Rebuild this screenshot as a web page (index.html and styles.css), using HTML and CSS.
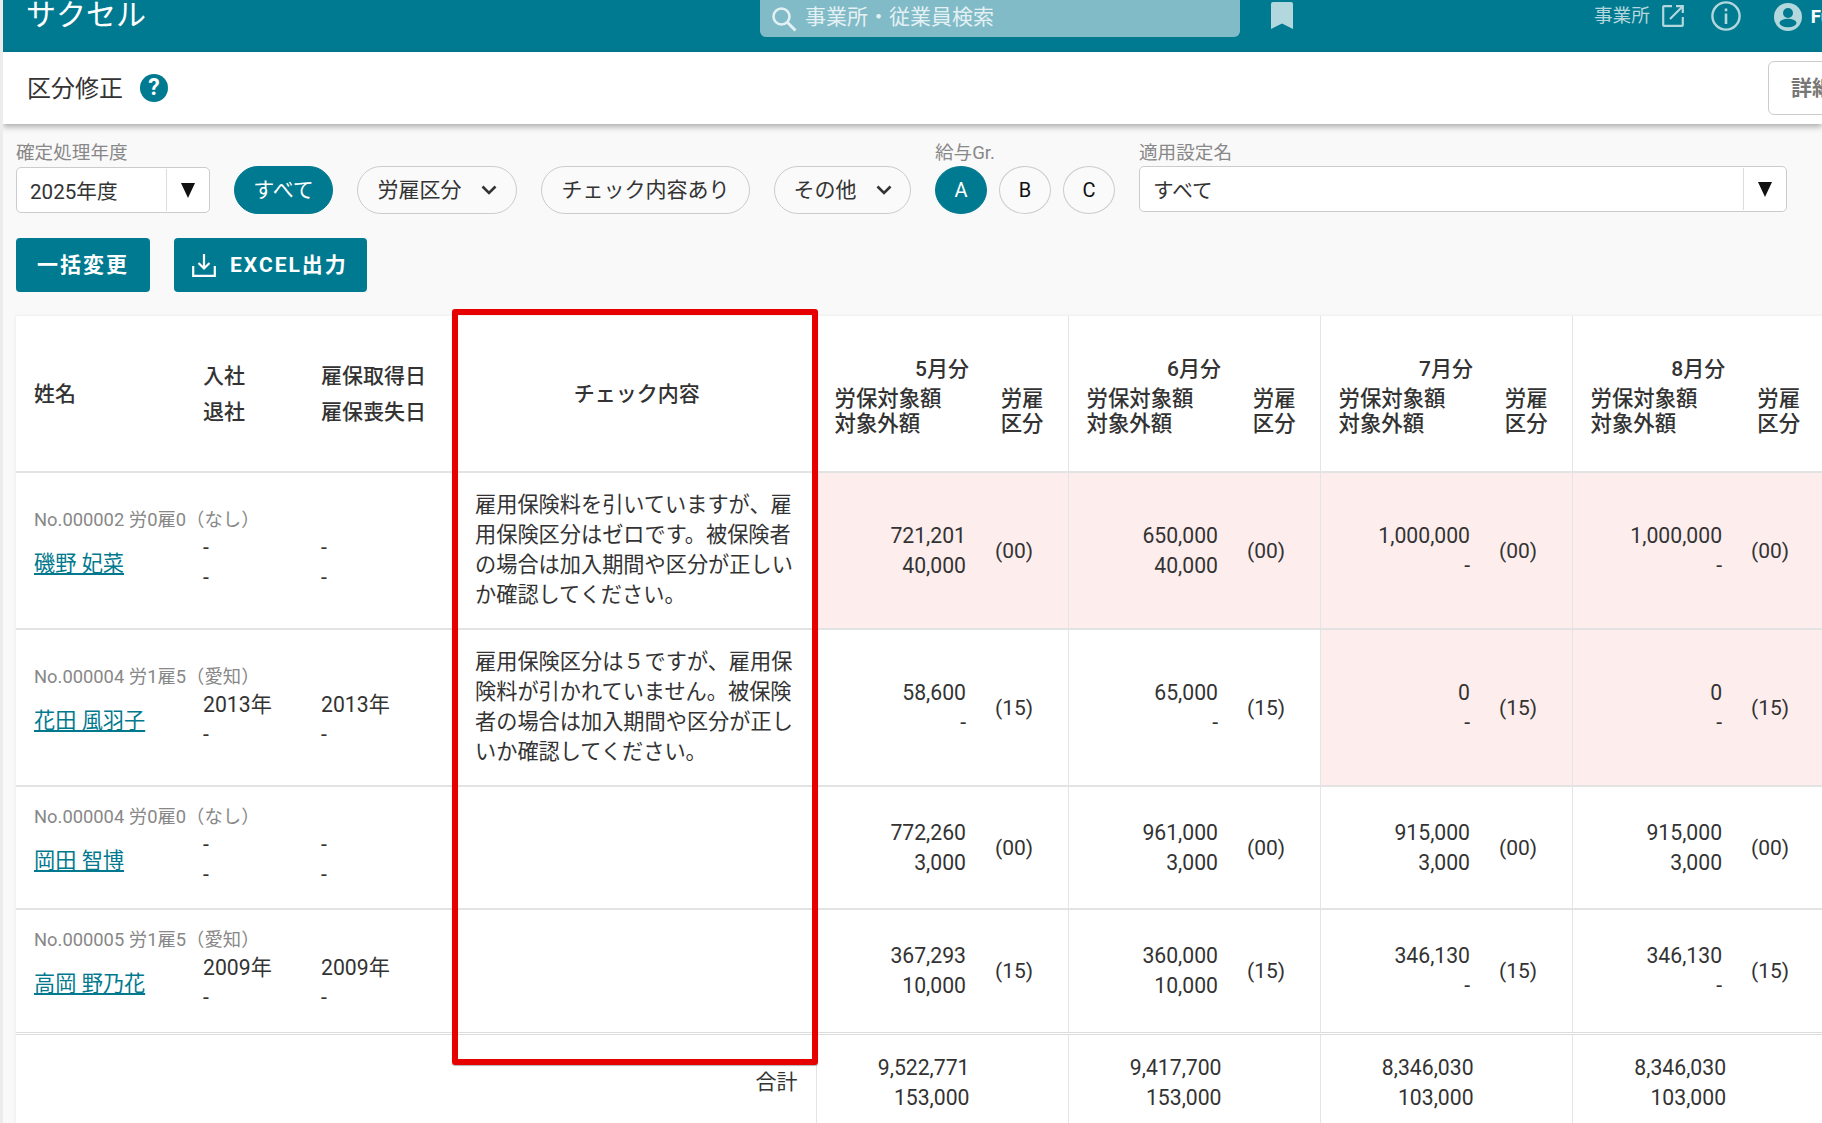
FILE: index.html
```html
<!DOCTYPE html>
<html lang="ja">
<head>
    <meta charset="UTF-8">
    <meta name="viewport" content="width=device-width, initial-scale=1.0">
    <title>区分修正</title>
    <link rel="stylesheet" href="styles.css">
</head>
<body>
    <div class="page">
        <header class="top-bar">
            <div class="logo">サクセル</div>
            <div class="search-box">
                <svg class="search-icon" viewBox="0 0 26 26" width="26" height="26"><circle cx="10.5" cy="10.5" r="8" fill="none" stroke="currentColor" stroke-width="2.6"/><path d="M16.5 16.5L24.5 24.5" stroke="currentColor" stroke-width="3" fill="none"/></svg>
                <span>事業所・従業員検索</span>
            </div>
            <svg class="bookmark-icon" viewBox="0 0 22 27" width="22" height="27"><path d="M2 0H20Q22 0 22 2V27L11 21.5L0 27V2Q0 0 2 0Z" fill="currentColor"/></svg>
            <div class="top-right">
                <span class="office-link">事業所</span>
                <svg viewBox="0 0 22 22" width="22" height="22"><path d="M10 1.2H2Q1.2 1.2 1.2 2V20Q1.2 20.8 2 20.8H20Q20.8 20.8 20.8 20V12M8 14L20.5 1.5M14 1.2H20.8V8" fill="none" stroke="currentColor" stroke-width="2.2"/></svg>
                <svg class="info-icon" viewBox="0 0 30 30" width="30" height="30"><circle cx="15" cy="15" r="13.6" fill="none" stroke="currentColor" stroke-width="2.4"/><rect x="13.7" y="12.5" width="2.6" height="10.5" fill="currentColor"/><rect x="13.7" y="7.5" width="2.6" height="2.8" fill="currentColor"/></svg>
                <svg class="user-icon" viewBox="0 0 28 28" width="28" height="28"><circle cx="14" cy="14" r="14" fill="currentColor"/><circle cx="14" cy="10" r="5" fill="#007a90"/><ellipse cx="14" cy="20" rx="8.5" ry="4.2" fill="#007a90"/></svg>
                <span class="user-name">Fu</span>
            </div>
        </header>

        <div class="sub-header">
            <h1>区分修正</h1>
            <div class="help-badge">?</div>
            <button class="detail-button">詳細</button>
        </div>

        <div class="filter-row">
            <div class="field year-field">
                <label>確定処理年度</label>
                <div class="select-box"><span>2025年度</span><i class="select-arrow"></i></div>
            </div>
            <button class="pill active all-pill">すべて</button>
            <button class="pill">労雇区分<svg class="chevron" viewBox="0 0 16 10" width="16" height="10"><path d="M1.5 1.5L8 8L14.5 1.5" fill="none" stroke="currentColor" stroke-width="2.6"/></svg></button>
            <button class="pill">チェック内容あり</button>
            <button class="pill other-pill">その他<svg class="chevron" viewBox="0 0 16 10" width="16" height="10"><path d="M1.5 1.5L8 8L14.5 1.5" fill="none" stroke="currentColor" stroke-width="2.6"/></svg></button>
            <div class="field group-field">
                <label>給与Gr.</label>
                <div class="group-buttons">
                    <button class="round active">A</button>
                    <button class="round">B</button>
                    <button class="round">C</button>
                </div>
            </div>
            <div class="field setting-field">
                <label>適用設定名</label>
                <div class="select-box"><span>すべて</span><i class="select-arrow"></i></div>
            </div>
        </div>

        <div class="action-row">
            <button class="action-button">一括変更</button>
            <button class="action-button excel">
                <svg viewBox="0 0 24 24" width="24" height="24"><path d="M12 1V15M6.5 10L12 15.5L17.5 10M1.2 13V22.8H22.8V13" fill="none" stroke="currentColor" stroke-width="2.2"/></svg>
                EXCEL出力
            </button>
        </div>

        <div class="table-wrap">
            <table class="salary-table">
                <colgroup>
                    <col class="col-name"><col class="col-date"><col class="col-ins"><col class="col-check">
                    <col class="col-amount"><col class="col-class">
                    <col class="col-amount"><col class="col-class">
                    <col class="col-amount"><col class="col-class">
                    <col class="col-amount"><col class="col-class">
                </colgroup>
                <thead>
                    <tr>
                        <th class="name-cell">姓名</th>
                        <th class="date-head">入社<br>退社</th>
                        <th class="date-head">雇保取得日<br>雇保喪失日</th>
                        <th class="check-head">チェック内容</th>
                        <th class="month-head" colspan="2"><div class="month-title">5月分</div><div class="month-sub"><span>労保対象額<br>対象外額</span><span>労雇<br>区分</span></div></th>
                        <th class="month-head" colspan="2"><div class="month-title">6月分</div><div class="month-sub"><span>労保対象額<br>対象外額</span><span>労雇<br>区分</span></div></th>
                        <th class="month-head" colspan="2"><div class="month-title">7月分</div><div class="month-sub"><span>労保対象額<br>対象外額</span><span>労雇<br>区分</span></div></th>
                        <th class="month-head" colspan="2"><div class="month-title">8月分</div><div class="month-sub"><span>労保対象額<br>対象外額</span><span>労雇<br>区分</span></div></th>
                    </tr>
                </thead>
                <tbody>
                    <tr class="tall">
                        <td class="name-cell"><div class="emp-no">No.000002 労0雇0（なし）</div><a class="emp-name" href="#">磯野 妃菜</a></td>
                        <td class="date-cell">-<br>-</td>
                        <td class="date-cell">-<br>-</td>
                        <td class="check-cell">雇用保険料を引いていますが、雇用保険区分はゼロです。被保険者の場合は加入期間や区分が正しいか確認してください。</td>
                        <td class="amount warn">721,201<br>40,000</td><td class="class-cell warn">(00)</td>
                        <td class="amount warn">650,000<br>40,000</td><td class="class-cell warn">(00)</td>
                        <td class="amount warn">1,000,000<br>-</td><td class="class-cell warn">(00)</td>
                        <td class="amount warn">1,000,000<br>-</td><td class="class-cell warn">(00)</td>
                    </tr>
                    <tr class="tall">
                        <td class="name-cell"><div class="emp-no">No.000004 労1雇5（愛知）</div><a class="emp-name" href="#">花田 風羽子</a></td>
                        <td class="date-cell">2013年<br>-</td>
                        <td class="date-cell">2013年<br>-</td>
                        <td class="check-cell">雇用保険区分は５ですが、雇用保険料が引かれていません。被保険者の場合は加入期間や区分が正しいか確認してください。</td>
                        <td class="amount">58,600<br>-</td><td class="class-cell">(15)</td>
                        <td class="amount">65,000<br>-</td><td class="class-cell">(15)</td>
                        <td class="amount warn">0<br>-</td><td class="class-cell warn">(15)</td>
                        <td class="amount warn">0<br>-</td><td class="class-cell warn">(15)</td>
                    </tr>
                    <tr class="short">
                        <td class="name-cell"><div class="emp-no">No.000004 労0雇0（なし）</div><a class="emp-name" href="#">岡田 智博</a></td>
                        <td class="date-cell">-<br>-</td>
                        <td class="date-cell">-<br>-</td>
                        <td class="check-cell"></td>
                        <td class="amount">772,260<br>3,000</td><td class="class-cell">(00)</td>
                        <td class="amount">961,000<br>3,000</td><td class="class-cell">(00)</td>
                        <td class="amount">915,000<br>3,000</td><td class="class-cell">(00)</td>
                        <td class="amount">915,000<br>3,000</td><td class="class-cell">(00)</td>
                    </tr>
                    <tr class="short last-row">
                        <td class="name-cell"><div class="emp-no">No.000005 労1雇5（愛知）</div><a class="emp-name" href="#">高岡 野乃花</a></td>
                        <td class="date-cell">2009年<br>-</td>
                        <td class="date-cell">2009年<br>-</td>
                        <td class="check-cell"></td>
                        <td class="amount">367,293<br>10,000</td><td class="class-cell">(15)</td>
                        <td class="amount">360,000<br>10,000</td><td class="class-cell">(15)</td>
                        <td class="amount">346,130<br>-</td><td class="class-cell">(15)</td>
                        <td class="amount">346,130<br>-</td><td class="class-cell">(15)</td>
                    </tr>
                </tbody>
                <tfoot>
                    <tr>
                        <td class="total-label" colspan="4">合計</td>
                        <td class="total-amount" colspan="2">9,522,771<br>153,000</td>
                        <td class="total-amount" colspan="2">9,417,700<br>153,000</td>
                        <td class="total-amount" colspan="2">8,346,030<br>103,000</td>
                        <td class="total-amount" colspan="2">8,346,030<br>103,000</td>
                    </tr>
                </tfoot>
            </table>
            <div class="check-highlight"></div>
        </div>
    </div>
</body>
</html>
```

FILE: styles.css
```css
* {
    box-sizing: border-box;
}

body {
    margin: 0;
    overflow: hidden;
    background-color: #f9f9f9;
    color: #333;
    font-family: Roboto, "Noto Sans CJK JP", sans-serif;
    font-size: 21px;
}

button {
    font-family: inherit;
}

.page {
    width: 1822px;
    height: 1123px;
    overflow: hidden;
    border-left: 3px solid #ececec;
}

/* ヘッダー */
.top-bar {
    display: flex;
    align-items: flex-start;
    height: 52px;
    margin-left: -3px;
    background-color: #007a90;
    box-shadow: inset 2px 0 0 #006a7d;
    color: #b2d7dd;
    overflow: hidden;
}

.logo {
    flex: none;
    width: 760px;
    padding-left: 26px;
    color: #fff;
    font-size: 30px;
    line-height: 30px;
}

.search-box {
    display: flex;
    flex: none;
    align-items: center;
    width: 480px;
    height: 37px;
    padding: 0 0 7px 11px;
    background-color: #81bbc7;
    border-radius: 0 0 6px 6px;
    color: #e4f1f4;
    font-size: 21px;
}

.search-icon {
    margin: 7px 8px 0 0;
}

.bookmark-icon {
    flex: none;
    margin: 2px 0 0 31px;
}

.top-right {
    display: flex;
    flex: none;
    align-items: flex-start;
    margin-left: 301px;
    white-space: nowrap;
}

.office-link {
    font-size: 18.6px;
    line-height: 33px;
    margin-right: 12px;
}

.top-right svg {
    margin-top: 5px;
    flex: none;
}

.top-right .info-icon {
    margin: 1px 0 0 27px;
}

.top-right .user-icon {
    margin: 3px 0 0 33px;
}

.user-name {
    margin-left: 9px;
    color: #fff;
    font-size: 18.6px;
    font-weight: 700;
    line-height: 34px;
}

/* タイトル行 */
.sub-header {
    display: flex;
    align-items: center;
    position: relative;
    height: 72px;
    padding-left: 24px;
    background-color: #fff;
    box-shadow: 0 3px 6px rgba(0,0,0,0.3);
}

.sub-header h1 {
    margin: 0 0 3px;
    font-size: 24px;
    font-weight: 400;
}

.help-badge {
    width: 28px;
    height: 28px;
    margin: 0 0 1px 17px;
    border-radius: 50%;
    background-color: #007a90;
    color: #fff;
    font-size: 23px;
    font-weight: 700;
    line-height: 28px;
    text-align: center;
}

.detail-button {
    height: 54px;
    width: 90px;
    margin-left: auto;
    margin-right: -36px;
    padding: 0 0 4px 22px;
    background-color: #fff;
    border: 1px solid #ccc;
    border-radius: 6px;
    color: #777;
    font-size: 21px;
    font-weight: 700;
    text-align: left;
}

/* 絞り込み */
.filter-row {
    display: flex;
    align-items: flex-start;
    gap: 24px;
    padding: 18px 0 0 13px;
    white-space: nowrap;
}

.field label {
    display: block;
    height: 24px;
    color: #888;
    font-size: 18.6px;
    line-height: 22px;
}

.year-field {
    width: 194px;
}

.setting-field {
    width: 648px;
}

.select-box {
    display: flex;
    align-items: center;
    height: 46px;
    padding-left: 13px;
    background-color: #fff;
    border: 1px solid #ccc;
    border-radius: 5px;
    position: relative;
    font-size: 20.6px;
    color: #333;
}

.year-field .select-box {
    margin-top: 1px;
}

.select-arrow {
    position: absolute;
    top: 1px;
    right: 0;
    width: 43px;
    height: 42px;
    border-left: 1px solid #ddd;
}

.select-arrow::after {
    content: "";
    position: absolute;
    top: 14px;
    left: 14px;
    border-left: 7px solid transparent;
    border-right: 7px solid transparent;
    border-top: 15px solid #111;
}

.pill {
    display: flex;
    align-items: center;
    justify-content: center;
    height: 48px;
    margin-top: 24px;
    padding: 0 19.5px 4px;
    background-color: #fafafa;
    border: 1px solid #ccc;
    border-radius: 24px;
    color: #333;
    font-size: 21px;
}

.pill.active {
    background-color: #007a90;
    border-color: #007a90;
    color: #fff;
}

.all-pill {
    width: 99px;
    padding-left: 0;
    padding-right: 0;
}

.chevron {
    flex: none;
    margin: 4px 0 0 19px;
}

.other-pill {
    width: 137px;
    padding-left: 0;
    padding-right: 0;
}

.group-buttons {
    display: flex;
    gap: 12px;
}

.round {
    width: 52px;
    height: 48px;
    background-color: #fafafa;
    border: 1px solid #ccc;
    border-radius: 50%;
    color: #111;
    font-size: 20px;
}

.round.active {
    background-color: #007a90;
    border-color: #007a90;
    color: #fff;
}

.action-row {
    display: flex;
    gap: 24px;
    margin: 24px 0 24px 13px;
}

.action-button {
    display: flex;
    align-items: center;
    gap: 14px;
    height: 54px;
    padding: 0 21px 4px;
    background-color: #007a90;
    border: none;
    border-radius: 4px;
    color: #fff;
    font-size: 21px;
    font-weight: 700;
    letter-spacing: 2px;
}

.excel {
    padding: 0 19px 4px 18px;
}

.excel svg {
    margin-top: 4px;
}

/* 一覧 */
.table-wrap {
    position: relative;
    width: 1812px;
    margin-left: 13px;
}

.salary-table {
    width: 1808px;
    table-layout: fixed;
    border-collapse: collapse;
    background-color: #fff;
    box-shadow: 0 0 3px rgba(0,0,0,0.08);
    line-height: 30px;
}

.col-name { width: 187px; }
.col-date { width: 118px; }
.col-ins { width: 132px; }
.col-check { width: 363px; }
.col-amount { width: 168px; }
.col-class { width: 84px; }

.salary-table thead tr {
    height: 156px;
    border-bottom: 2px solid #e3e3e3;
}

.salary-table th {
    padding: 0;
    font-weight: 500;
    text-align: left;
    vertical-align: middle;
    line-height: 36px;
}

.salary-table .name-cell {
    padding-left: 18px;
    white-space: nowrap;
}

.check-head {
    padding-left: 5px !important;
    text-align: center !important;
}

.month-head {
    padding: 3px 24px 0 18px !important;
    border-left: 1px solid #e4e4e4;
}

.month-title {
    line-height: 30px;
    text-align: center;
    margin-left: -18px;
    margin-right: -24px;
}

.month-sub {
    display: flex;
    justify-content: space-between;
    margin-top: 2px;
    font-size: 21.4px;
    line-height: 25px;
}

.tall {
    height: 157px;
}

.short {
    height: 123px;
}

.salary-table tbody tr {
    border-bottom: 2px solid #e3e3e3;
}

.salary-table tbody tr.last-row {
    height: 124px;
    border-bottom: 3px double #ddd;
}

.salary-table td {
    padding: 0;
    vertical-align: middle;
}

.salary-table tbody .name-cell {
    padding-bottom: 18px;
}

.emp-no {
    color: #888;
    font-size: 18.35px;
    line-height: 26px;
}

.emp-name {
    display: block;
    width: max-content;
    margin-top: 18px;
    color: #00798e;
    font-size: 21.2px;
    line-height: 26px;
    text-decoration: underline;
}

.salary-table .date-cell {
    padding-top: 25px;
    font-size: 21.2px;
}

.check-cell {
    padding: 0 22px 1px 22px !important;
    font-size: 21.2px;
}

.amount {
    padding-right: 18px !important;
    border-left: 1px solid #e4e4e4;
    font-size: 21.2px;
    text-align: right;
}

.class-cell {
    padding-left: 11px !important;
}

.warn {
    background-color: #fdeded;
}

.salary-table tfoot tr {
    height: 92px;
}

.total-label {
    padding: 5px 18px 0 0 !important;
    text-align: right;
}

.total-amount {
    padding-right: 98px !important;
    border-left: 1px solid #e4e4e4;
    font-size: 21.2px;
    text-align: right;
    vertical-align: top !important;
    padding-top: 18px !important;
}

/* 赤枠 */
.check-highlight {
    position: absolute;
    top: -7px;
    left: 436px;
    width: 366px;
    height: 756px;
    border: 6px solid #e60000;
    border-radius: 3px;
    box-shadow: 0 1px 1px rgba(0,0,0,0.3);
}
```
